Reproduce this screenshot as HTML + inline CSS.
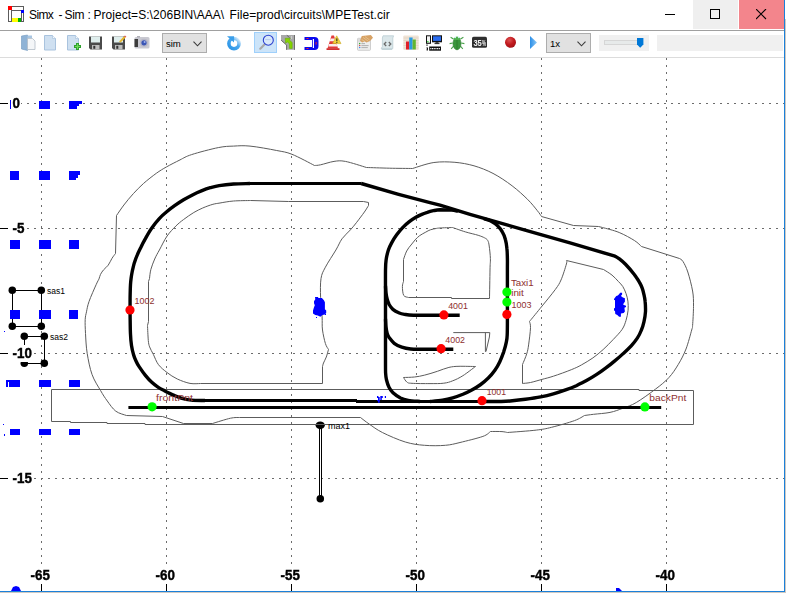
<!DOCTYPE html>
<html lang="en">
<head>
<meta charset="utf-8">
<title>Simx - Sim</title>
<style>
html,body{margin:0;padding:0;background:#fff;}
body{width:786px;height:593px;overflow:hidden;position:relative;font-family:"Liberation Sans",sans-serif;}
.win{position:absolute;left:0;top:0;width:784px;height:591px;background:#fff;border-right:1px solid #1b80d9;border-bottom:1px solid #1b80d9;overflow:hidden;}
.edge-r{position:absolute;left:785px;top:19px;width:1px;height:574px;background:#cfc9c2;}
.edge-b{position:absolute;left:0;top:592px;width:786px;height:1px;background:#cfc9c2;}
.titlebar{position:absolute;left:0;top:0;width:784px;height:30px;background:#fff;}
.appicon{position:absolute;left:8px;top:6px;}
.title{position:absolute;left:29px;top:7px;width:370px;height:16px;line-height:16px;font-size:12px;color:#000;white-space:pre;}
.title span{position:absolute;top:0;}
.cap{position:absolute;top:0;height:29px;}
.cap svg{position:absolute;top:9px;}
.cap.min{left:647px;width:46px;}
.cap.max{left:693px;width:45px;background:#efefef;}
.cap.close{left:739px;width:45px;background:#f3858c;}
.toolbar{position:absolute;left:0;top:30px;width:784px;height:28px;background:#fff;border-top:1px solid #a0a0a0;border-bottom:1px solid #dcdcdc;box-sizing:border-box;}
.tb{position:absolute;left:0;top:0;width:784px;height:58px;pointer-events:none;}
.ic{position:absolute;overflow:visible;}
.sel{position:absolute;background:#cce4f9;border:1px solid #9fd0fb;}
.combo{position:absolute;top:33px;height:18px;width:43px;background:#e1e1e1;border:1px solid #adadad;font-size:9.6px;line-height:19px;color:#000;}
.combo span{position:absolute;left:3px;top:0;white-space:pre;letter-spacing:-0.1px;}
.combo svg{position:absolute;right:4px;top:7px;}
.slider{position:absolute;left:599px;top:35px;width:50px;height:16px;background:#f0f0f0;}
.slider .trk{position:absolute;left:5px;top:5px;width:32px;height:3px;background:#e7eaea;border:1px solid #d6d6d6;box-sizing:content-box;}
.slider svg{position:absolute;left:38px;top:3px;}
.status{position:absolute;left:657px;top:35px;width:126px;height:16px;background:#f0f0f0;}
.plot{position:absolute;left:0;top:58px;}
.axis,.gs{will-change:transform;}
</style>
</head>
<body>
<div class="win">
  <div class="titlebar">
    <svg class="appicon" width="16" height="16" viewBox="0 0 16 16" shape-rendering="crispEdges">
      <rect x="0.5" y="0.5" width="15" height="15" fill="#fff" stroke="#5c5c5c"/>
      <path d="M3.5,4V15.5M13.5,7V15.5M4,4.5H13M3.5,12.5H13.5" stroke="#5c5c5c" fill="none"/>
      <rect x="0" y="0" width="4" height="4" fill="#ff0000"/>
      <rect x="13" y="4" width="3" height="3" fill="#0000ff"/>
      <rect x="4" y="12" width="6" height="3.5" fill="#ffff00"/>
      <rect x="10" y="12" width="3" height="3.5" fill="#00b400"/>
    </svg>
    <div class="title"><span style="left:0;letter-spacing:-0.6px">Simx </span><span style="left:29.4px">- </span><span style="left:35.6px;letter-spacing:-0.4px">Sim </span><span style="left:58.6px">: </span><span style="left:64.4px;letter-spacing:0.05px">Project=S:\206BIN\AAA\  </span><span style="left:200.6px;letter-spacing:0.06px">File=prod\circuits\MPETest.cir</span></div>
    <div class="cap min"><svg style="left:18px" width="11" height="11" viewBox="0 0 11 11" shape-rendering="crispEdges"><rect x="0" y="5" width="10" height="1" fill="#000"/></svg></div>
    <div class="cap max"><svg style="left:17px" width="11" height="11" viewBox="0 0 11 11" shape-rendering="crispEdges"><rect x="0.5" y="0.5" width="9" height="9" fill="none" stroke="#000"/></svg></div>
    <div class="cap close"><svg style="left:17px" width="11" height="11" viewBox="0 0 11 11"><path d="M0,0L10,10M10,0L0,10" stroke="#000" stroke-width="1.1" fill="none"/></svg></div>
  </div>
  <div class="toolbar"></div>
  <div class="tb">
<svg class="ic" style="left:21px;top:35px" width="16" height="16" viewBox="0 0 16 16"><path d="M0.5,1 L6.5,0 L6.5,15.5 L0.5,14Z" fill="#8fb3d6" stroke="#6f97c0" stroke-width=".6"/><path d="M6.5,0.5H11V3H6.5Z" fill="#a9c6e2"/><path d="M6.5,3.5H11.5L14,6V14.5H6.5Z" fill="#f4f6f8" stroke="#b3bcc6" stroke-width=".8"/></svg>
<svg class="ic" style="left:44px;top:35px" width="16" height="16" viewBox="0 0 16 16"><path d="M0.5,0.5H8.5L11.5,3.5V15H0.5Z" fill="#cfe0f1" stroke="#a9c3de" stroke-width="1"/><path d="M8.5,0.5V3.5H11.5" fill="#f3f8fc" stroke="#a9c3de" stroke-width=".7"/></svg>
<svg class="ic" style="left:67px;top:35px" width="16" height="16" viewBox="0 0 16 16"><path d="M0.5,0.5H8.5L11.5,3.5V15H0.5Z" fill="#cfe0f1" stroke="#a9c3de" stroke-width="1"/><path d="M8.5,0.5V3.5H11.5" fill="#f3f8fc" stroke="#a9c3de" stroke-width=".7"/><path d="M7,11.5H14M10.5,8V15" stroke="#2f9f2f" stroke-width="3"/><path d="M8,11.5H13M10.5,9V14" stroke="#6fdc5a" stroke-width="1.2"/></svg>
<svg class="ic" style="left:88px;top:35px" width="16" height="16" viewBox="0 0 16 16"><path d="M1,1.5H14V14.5H2.5L1,13Z" fill="#4a4a4a"/><rect x="3" y="1.5" width="9" height="6" fill="#dfeeed"/><rect x="4" y="10" width="7.5" height="4.5" fill="#bdbdbd"/><rect x="5.3" y="10.8" width="2" height="3" fill="#333"/></svg>
<svg class="ic" style="left:111px;top:35px" width="16" height="16" viewBox="0 0 16 16"><path d="M1,1.5H14V14.5H2.5L1,13Z" fill="#4a4a4a"/><rect x="3" y="1.5" width="9" height="6" fill="#dfeeed"/><rect x="4" y="10" width="7.5" height="4.5" fill="#bdbdbd"/><rect x="5.3" y="10.8" width="2" height="3" fill="#333"/><path d="M8,6.5 L13,1.2 L14.6,2.6 L9.6,7.6Z" fill="#e8b830"/><path d="M13,1.2L14,0.4L15.4,1.8L14.6,2.6Z" fill="#e05050"/></svg>
<svg class="ic" style="left:134px;top:35px" width="16" height="16" viewBox="0 0 16 16"><rect x="0.5" y="2" width="15" height="11.5" rx="1.5" fill="#c9c9d1"/><rect x="0.5" y="4" width="3.5" height="8" fill="#3c3c3c"/><rect x="3" y="1" width="3" height="1.5" fill="#b0b0b8"/><circle cx="10" cy="7.8" r="4" fill="#b7b7c7"/><circle cx="10" cy="7.8" r="2.6" fill="#3a55b5"/><circle cx="10.6" cy="7" r="1" fill="#9fb2ee"/></svg>
<svg class="ic" style="left:226px;top:35px" width="16" height="16" viewBox="0 0 16 16"><defs><linearGradient id="rg" x1="0" y1="1" x2="1" y2="0"><stop offset="0" stop-color="#2a94e6"/><stop offset=".6" stop-color="#4aa8ee"/><stop offset="1" stop-color="#e8f3fc"/></linearGradient></defs><circle cx="8" cy="8.6" r="5.1" fill="none" stroke="url(#rg)" stroke-width="3.6"/><path d="M1,1.2H8V7.5L5.5,5.2Z" fill="#3b9fea"/><path d="M6.3,1.5H8V5" fill="none" stroke="#fff" stroke-width="0"/></svg>
<div class="sel" style="left:254px;top:32px;width:21px;height:19px"></div><svg class="ic" style="left:258px;top:35px" width="16" height="16" viewBox="0 0 16 16"><path d="M2.3,13.7L6.7,9.3" stroke="#a8a8a8" stroke-width="2.2" stroke-linecap="round"/><circle cx="10.3" cy="5.2" r="5" fill="#d9e8fa" stroke="#2a3fd0" stroke-width="1.1"/><path d="M7.2,4.6H12.8" stroke="#b8cdee" stroke-width="1"/></svg>
<svg class="ic" style="left:281px;top:35px" width="16" height="16" viewBox="0 0 16 16"><path d="M0,0H14V14.8H5.1V9.8L0,5.3Z" fill="#a9a9a9"/><path d="M5.6,9.8V14.8M13.5,0V14.8" stroke="#6e6e6e" stroke-width="1" fill="none"/><path d="M0.2,5.2L5.4,9.9M5.8,0.3L8.6,2.6" stroke="#666" stroke-width="1" fill="none"/><path d="M10.6,1V4M10.6,10V13" stroke="#d8d8d8" stroke-width=".8"/><path d="M4.2,3.3H9.3L8.2,4.9L11.2,7.5V13.4H8.4V8.8L6.3,6.9L4.6,8.2Z" fill="#86d400" stroke="#5fa800" stroke-width=".5"/></svg>
<svg class="ic" style="left:304px;top:35px" width="16" height="16" viewBox="0 0 16 16"><path d="M0.5,2H10.5Q14.5,2 14.5,6V11Q14.5,15 10.5,15H0.5V12H8V5H0.5Z" fill="#0a0aee"/><rect x="8.8" y="4" width="1.2" height="9" fill="#fff"/><rect x="2.5" y="3" width="2" height="1" fill="#ff2020"/><rect x="2.5" y="13" width="2" height="1" fill="#ff2020"/><rect x="11.6" y="7" width="1" height="2.6" fill="#ff2020"/></svg>
<svg class="ic" style="left:326px;top:35px" width="16" height="16" viewBox="0 0 16 16"><path d="M5.5,0.5H8L12,13.5H1.5Z" fill="#e23b3b"/><path d="M4.6,3.6H9L9.8,6.2H3.8Z" fill="#fbeeee"/><path d="M3,9H10.6L11.4,11.4H2.3Z" fill="#fbeeee"/><path d="M0.5,13.2H13.5V15H0.5Z" fill="#d03030"/><path d="M10.7,0.8L15,8.6H6.6Z" fill="#f2d43a" stroke="#c9a820" stroke-width=".6"/><rect x="10.3" y="3.4" width="1.1" height="2.6" fill="#222"/><rect x="10.3" y="6.7" width="1.1" height="1.1" fill="#222"/></svg>
<svg class="ic" style="left:357px;top:35px" width="16" height="16" viewBox="0 0 16 16"><rect x="0.5" y="3.3" width="13" height="12" rx="0.8" fill="#ededed" stroke="#c4c4c4" stroke-width=".8"/><rect x="0.9" y="3.7" width="12.2" height="3.2" fill="#dcdcdc"/><circle cx="2.7" cy="8.6" r=".75" fill="#2fae2f"/><circle cx="2.7" cy="10.6" r=".75" fill="#d04848"/><circle cx="2.7" cy="12.6" r=".75" fill="#3a84f0"/><path d="M4.4,8.6H8M4.4,10.6H11.6M4.4,12.6H10.8" stroke="#a9a9a9" stroke-width=".9"/><path d="M3,5.8L4.8,0.9L13.9,0L16,2.7L13.3,5.8L9.6,7.6L7.6,6.2L5.2,7.4Z" fill="#d7a265"/><path d="M6,2.4L11,6M8,1.6L12.6,5M4.6,4.4L8,6.6" stroke="#f0d3a4" stroke-width=".6" fill="none"/></svg>
<svg class="ic" style="left:380px;top:35px" width="16" height="16" viewBox="0 0 16 16"><path d="M3,0.8H13.6L12.8,3V13.6H1.2L2.4,11.5V3Z" fill="#dbe7ea" stroke="#b9cdd2" stroke-width=".8"/><path d="M1,13.6H11.5L12.6,15H2Z" fill="#c3d4d9"/><path d="M6.2,7L4.2,9L6.2,11M8.8,7L10.8,9L8.8,11" fill="none" stroke="#6a6a6a" stroke-width="1.3"/></svg>
<svg class="ic" style="left:403px;top:35px" width="16" height="16" viewBox="0 0 16 16"><rect x="0.3" y="0.5" width="15.4" height="14.6" rx="1" fill="#efe3d6"/><path d="M0.5,3H15.5M0.5,5.5H15.5M0.5,8H15.5M0.5,10.5H15.5M0.5,13H15.5" stroke="#e0d0bf" stroke-width=".7"/><rect x="3" y="6.5" width="3.2" height="8" fill="#e0202a"/><rect x="6.2" y="2.5" width="3.4" height="12" fill="#2a9be0"/><rect x="9.6" y="4.5" width="3.2" height="10" fill="#62b530"/></svg>
<svg class="ic" style="left:426px;top:35px" width="16" height="16" viewBox="0 0 16 16"><rect x="0" y="0.3" width="5" height="8.5" fill="#111"/><rect x="1" y="1.3" width="3" height="6.4" fill="#f4f4f4"/><rect x="1.2" y="6" width="1.3" height="1.3" fill="#2fd22f"/><rect x="6" y="0.3" width="10" height="7" fill="#111"/><rect x="7" y="1.3" width="8" height="4.6" fill="#2a6cf0"/><rect x="9.5" y="7.3" width="3" height="1" fill="#111"/><rect x="8.5" y="8.2" width="5" height="0.9" fill="#111"/><rect x="3.2" y="11.5" width="11.8" height="4.2" fill="#111"/><path d="M4.3,13.6H14" stroke="#fff" stroke-width="1.3" stroke-dasharray="1.1 0.6"/><path d="M1,9.5V10.8M0.7,12.5Q2,13 1,15.5" stroke="#111" stroke-width="1.2" fill="none"/></svg>
<svg class="ic" style="left:449px;top:35px" width="16" height="16" viewBox="0 0 16 16"><path d="M4.5,4L1.6,2.2M11.5,4L14.4,2.2M3.8,8L0.6,8.6M12.2,8L15.4,8.6M4.6,11L2.2,13.8M11.4,11L13.8,13.8" stroke="#4aa04a" stroke-width="1.1" fill="none"/><ellipse cx="8" cy="8.6" rx="4" ry="6.2" fill="#3a963c" stroke="#2b7a30" stroke-width=".6"/><path d="M4.6,3.2Q8,0 11.4,3.2L10.8,5H5.2Z" fill="#4eb04e"/><path d="M8,5V14.6" stroke="#2c7c2c" stroke-width=".9"/><circle cx="6.2" cy="2.4" r=".8" fill="#d8f4ff"/><circle cx="9.8" cy="2.4" r=".8" fill="#d8f4ff"/></svg>
<svg class="ic gs" style="left:472px;top:35px" width="16" height="16" viewBox="0 0 16 16"><rect x="0" y="1.8" width="15" height="11" rx="1.6" fill="#2f2f2f"/><g font-family="'Liberation Sans',sans-serif" font-weight="bold" fill="#f4f4f4"><text x="1.4" y="11" font-size="9.6" textLength="8.4" lengthAdjust="spacingAndGlyphs">35</text><text x="10.1" y="10.8" font-size="8.6" textLength="4.1" lengthAdjust="spacingAndGlyphs">%</text></g></svg>
<svg class="ic" style="left:503px;top:35px" width="16" height="16" viewBox="0 0 16 16"><defs><radialGradient id="rr" cx=".4" cy=".3" r=".8"><stop offset="0" stop-color="#dc5252"/><stop offset=".5" stop-color="#c21a1e"/><stop offset="1" stop-color="#9c1016"/></radialGradient></defs><circle cx="7.5" cy="7.3" r="5.5" fill="url(#rr)"/></svg>
<svg class="ic" style="left:526px;top:35px" width="16" height="16" viewBox="0 0 16 16"><defs><linearGradient id="pg" x1="0" y1="0" x2="1" y2="0"><stop offset="0" stop-color="#2b8fe8"/><stop offset="1" stop-color="#8cc6f4"/></linearGradient></defs><path d="M4,1L11,7.5L4,14Z" fill="url(#pg)"/></svg>
    <div class="combo" style="left:162px"><span>sim</span><svg width="9" height="6" viewBox="0 0 9 6"><path d="M0.5,0.7L4.5,4.8L8.5,0.7" fill="none" stroke="#3a3a3a" stroke-width="1.1"/></svg></div>
    <div class="combo" style="left:546px"><span>1x</span><svg width="9" height="6" viewBox="0 0 9 6"><path d="M0.5,0.7L4.5,4.8L8.5,0.7" fill="none" stroke="#3a3a3a" stroke-width="1.1"/></svg></div>
    <div class="slider"><div class="trk"></div><svg width="7" height="10" viewBox="0 0 7 10"><path d="M0,0H6.4V6.6L3.2,9.8L0,6.6Z" fill="#0078d7"/></svg></div>
    <div class="status"></div>
  </div>
<svg class="plot" width="786" height="535" viewBox="0 58 786 535">
<g stroke="#6c6c6c" stroke-width="1" stroke-dasharray="2 5" shape-rendering="crispEdges" fill="none">
<line x1="41.5" y1="58" x2="41.5" y2="565"/>
<line x1="166.5" y1="58" x2="166.5" y2="565"/>
<line x1="291.5" y1="58" x2="291.5" y2="565"/>
<line x1="416.5" y1="58" x2="416.5" y2="565"/>
<line x1="541.5" y1="58" x2="541.5" y2="565"/>
<line x1="666.5" y1="58" x2="666.5" y2="565"/>
<line x1="20" y1="103.5" x2="784" y2="103.5"/>
<line x1="20" y1="228.5" x2="784" y2="228.5"/>
<line x1="20" y1="353.5" x2="784" y2="353.5"/>
<line x1="20" y1="478.5" x2="784" y2="478.5"/>
</g>
<g stroke="#000" stroke-width="1" fill="none" shape-rendering="crispEdges">
<path d="M12.5,290.5H41.5V326.5H12.5Z"/>
<path d="M24.5,336.5H44.5V363.5H24.5Z"/>
<path d="M319.5,425V498M321.5,425V498"/>
</g>
<g fill="#000">
<circle cx="12.3" cy="290.3" r="3.75"/>
<circle cx="41.3" cy="290.3" r="3.75"/>
<circle cx="12.3" cy="326.3" r="3.75"/>
<circle cx="41.3" cy="326.3" r="3.75"/>
<circle cx="24.3" cy="336.3" r="3.75"/>
<circle cx="44.3" cy="336.3" r="3.75"/>
<circle cx="44.3" cy="363.3" r="3.75"/>
<circle cx="320.3" cy="498.8" r="3.75"/>
<circle cx="24.3" cy="363.3" r="3.75"/>
<ellipse cx="320.2" cy="425.3" rx="4.6" ry="3.9"/>
</g>
<g stroke="#5c5c5c" stroke-width="1" fill="none" stroke-linejoin="round">
<path d="M51.5,389.5 L639.0,389.5 L639.0,390.5 L693.5,390.5 L693.5,424.5 L145.0,424.5 L145.0,423.5 L107.0,423.5 L107.0,422.5 L70.5,422.5 L70.5,421.5 L51.5,421.5Z"/>
<path d="M115.5,253.5 L116.5,215.5 C117.7,213.8 121.1,208.7 123.9,205.0 C126.7,201.3 130.1,197.2 133.4,193.6 C136.7,190.0 139.8,186.8 143.6,183.4 C147.4,180.0 152.5,176.1 156.3,173.3 C160.1,170.6 162.6,169.1 166.5,166.9 C170.4,164.7 175.8,162.0 180.0,159.9 C184.2,157.8 185.2,156.7 191.6,154.6 C198.0,152.5 211.3,149.0 218.3,147.6 C225.3,146.2 228.3,146.3 233.6,146.1 C238.9,145.8 242.8,145.4 250.0,146.1 C257.2,146.8 269.7,149.1 276.7,150.5 C283.7,151.9 285.7,151.8 292.0,154.3 C298.3,156.8 310.8,163.6 314.5,165.5 C315.5,165.4 317.4,165.5 320.6,164.8 C323.9,164.1 329.9,162.0 334.0,161.4 C338.1,160.8 340.0,160.4 345.4,161.4 C350.8,162.4 363.0,166.5 366.5,167.5 C370.3,167.6 381.6,168.0 389.3,168.2 C397.0,168.4 408.6,168.4 412.5,168.5 C416.1,167.5 426.8,163.5 433.9,162.5 C441.0,161.5 448.2,161.8 454.9,162.3 C461.6,162.9 467.6,164.0 474.0,165.8 C480.4,167.7 486.6,170.1 493.0,173.4 C499.4,176.7 506.4,181.5 512.1,185.8 C517.8,190.1 523.2,195.1 527.4,199.2 C531.6,203.3 534.9,207.6 537.2,210.5 C539.6,213.4 540.8,215.5 541.5,216.5 L573.5,225.5 L598.5,226.5 L602.5,227.5 C605.3,228.3 613.9,230.3 619.2,232.5 C624.5,234.7 630.7,238.2 634.4,240.5 C638.1,242.8 640.3,245.5 641.5,246.5 L679.5,258.5 C680.1,259.0 681.6,259.2 683.0,261.5 C684.4,263.8 686.2,267.1 687.8,272.0 C689.4,276.9 691.6,285.3 692.6,291.0 C693.6,296.7 693.5,300.6 693.5,306.3 C693.5,312.0 692.9,321.4 692.6,325.4 C692.3,329.3 692.8,326.1 691.7,330.0 C690.6,333.9 688.2,343.3 686.0,349.0 C683.8,354.7 681.2,359.6 678.3,364.4 C675.4,369.2 672.6,373.6 668.8,377.7 C665.0,381.8 660.8,385.1 655.4,389.2 C650.0,393.3 641.7,399.3 636.3,402.5 C630.9,405.7 627.4,406.6 623.0,408.2 C618.6,409.8 614.9,411.4 610.0,412.4 C605.1,413.4 597.9,413.8 593.6,414.3 C589.4,414.8 586.0,415.3 584.5,415.5 C582.8,416.4 580.0,418.6 574.5,420.6 C569.0,422.6 558.0,425.7 551.6,427.3 C545.2,428.9 543.6,429.2 536.3,430.1 C528.9,431.0 512.3,432.1 507.5,432.5 C506.6,432.4 504.8,431.8 502.0,431.6 C499.2,431.4 492.4,431.5 490.5,431.5 C489.2,432.3 488.0,434.6 482.9,436.4 C477.8,438.2 466.2,441.0 460.0,442.5 C453.8,444.0 451.3,444.8 445.4,445.3 C439.5,445.8 431.1,445.9 424.4,445.3 C417.7,444.8 412.3,444.1 405.3,442.0 C398.3,439.9 388.4,435.5 382.4,432.5 C376.4,429.5 372.8,426.5 369.1,424.0 C365.5,421.5 361.9,418.6 360.5,417.5 L239.5,417.5 C238.0,417.6 235.0,417.2 230.5,418.2 C226.0,419.2 215.5,422.6 212.5,423.5 L183.5,423.5 L162.5,416.5 L126.5,415.5 C124.7,414.8 119.0,413.6 115.8,411.2 C112.6,408.8 109.8,404.4 107.3,401.0 C104.8,397.6 103.1,395.0 100.6,390.6 C98.0,386.2 94.2,380.6 92.0,374.4 C89.8,368.2 88.3,360.2 87.2,353.4 C86.1,346.6 85.8,339.1 85.5,333.4 C85.2,327.7 85.0,323.0 85.2,319.4 C85.4,315.8 85.9,314.8 86.5,311.8 C87.1,308.8 87.4,306.2 89.0,301.6 C90.6,297.0 94.6,288.1 96.3,284.3 C98.0,280.5 98.3,280.5 99.0,278.9 C99.7,277.2 99.7,275.9 100.5,274.4 C101.3,272.9 102.3,271.3 103.6,269.8 C104.9,268.3 106.8,267.1 108.2,265.2 C109.6,263.3 110.8,260.2 112.0,258.3 C113.2,256.4 114.9,254.3 115.5,253.5Z"/>
<path d="M250.5,200.5 L288.5,201.5 L363.5,201.5 L368.5,202.5 L368.5,205.5 C367.8,206.6 366.4,209.2 364.4,212.0 C362.4,214.8 359.0,219.3 356.7,222.3 C354.4,225.3 352.8,227.2 350.4,229.9 C347.9,232.7 344.4,235.5 342.0,238.8 C339.6,242.2 338.7,245.3 335.9,250.0 C333.1,254.7 327.9,262.4 325.4,267.2 C322.9,272.0 321.8,273.5 321.0,278.6 C320.2,283.7 320.4,291.3 320.6,297.7 C320.8,304.1 321.8,311.4 322.1,316.8 C322.4,322.2 321.9,325.6 322.5,330.0 C323.1,334.4 324.4,340.2 325.4,343.5 C326.4,346.8 328.0,348.5 328.5,349.5 C328.1,350.8 327.1,354.8 326.3,357.0 C325.5,359.2 324.1,361.4 323.5,363.0 C322.9,364.6 322.7,365.9 322.5,366.5 L322.5,383.5 L200.5,383.5 C198.8,383.5 193.9,384.1 190.0,383.4 C186.1,382.6 181.1,380.8 177.3,379.0 C173.5,377.2 170.1,374.9 167.0,372.5 C163.9,370.1 160.8,367.7 158.5,364.7 C156.2,361.7 154.9,357.5 153.4,354.5 C151.9,351.5 150.4,349.2 149.6,346.9 C148.8,344.6 148.7,344.1 148.3,340.5 C148.0,336.9 147.6,328.0 147.5,325.5 L148.5,321.5 L148.5,281.5 L149.5,278.5 C149.7,277.0 150.0,272.6 150.9,269.3 C151.8,266.1 153.3,262.2 154.7,259.0 C156.1,255.8 157.3,253.8 159.4,250.0 C161.5,246.2 164.3,240.0 167.1,236.0 C169.9,232.0 173.2,228.7 176.0,225.9 C178.8,223.2 180.6,221.7 183.6,219.5 C186.6,217.3 190.6,214.4 193.8,212.5 C197.0,210.6 199.5,209.4 202.7,208.0 C205.9,206.6 210.0,205.1 212.9,204.3 C215.8,203.5 216.6,203.6 220.0,203.0 C223.4,202.4 228.5,201.4 233.6,201.0 C238.7,200.6 247.7,200.6 250.5,200.5Z"/>
<path d="M403.5,281.5 L403.5,259.5 C404.0,258.1 405.4,253.4 406.7,251.0 C407.9,248.6 409.6,246.8 411.0,245.0 C412.4,243.2 413.7,241.5 415.1,239.9 C416.6,238.3 417.9,236.9 419.7,235.6 C421.5,234.3 424.0,233.1 425.8,232.1 C427.6,231.1 428.6,230.4 430.4,229.8 C432.2,229.2 434.9,228.7 436.5,228.4 C438.1,228.1 437.3,228.2 440.0,228.0 C442.7,227.8 450.4,227.6 452.5,227.5 C454.6,228.2 461.1,230.6 465.4,231.9 C469.7,233.2 475.0,234.3 478.2,235.3 C481.4,236.3 482.9,237.0 484.5,237.8 C486.1,238.7 486.9,239.0 487.7,240.4 C488.5,241.8 488.8,243.0 489.2,246.0 C489.6,249.0 490.3,254.6 490.4,258.6 C490.5,262.6 490.1,263.4 490.0,270.0 C489.9,276.6 489.6,293.8 489.5,298.5 L451.5,298.5 L451.5,297.5 L408.5,297.5 C407.7,297.1 404.7,297.2 403.7,295.4 C402.7,293.6 402.4,288.8 402.4,286.5 C402.4,284.2 403.3,282.3 403.5,281.5Z"/>
<path d="M453.3,332.6 L489.8,332.6 L489.4,337.0 L486.0,351.5 L485.4,351.5 L485.4,332.6"/>
<path d="M403.5,377.5 C405.3,377.4 411.0,377.4 414.5,377.0 C418.0,376.6 420.9,376.1 424.7,375.1 C428.5,374.2 433.4,372.6 437.4,371.3 C441.4,370.0 445.3,368.2 448.9,367.4 C452.5,366.6 454.6,366.4 459.0,366.3 C463.4,366.2 472.8,366.5 475.5,366.5 C473.4,368.0 466.7,373.3 462.9,375.7 C459.1,378.1 455.9,379.6 452.7,380.8 C449.5,382.1 447.6,382.7 443.8,383.2 C440.0,383.7 435.3,383.6 430.0,383.6 C424.7,383.6 415.9,383.6 412.0,383.3 C408.1,383.1 408.3,383.1 406.9,382.1 C405.5,381.1 404.1,378.3 403.5,377.5Z"/>
<path d="M566.5,260.5 L603.5,269.5 C604.9,270.4 609.5,273.1 612.0,275.1 C614.5,277.1 616.5,279.5 618.3,281.4 C620.1,283.3 621.5,284.5 622.8,286.5 C624.1,288.5 625.1,291.1 626.0,293.5 C626.9,295.9 627.5,298.4 627.9,301.2 C628.2,304.0 628.4,307.0 628.1,310.2 C627.8,313.4 627.0,317.2 626.0,320.4 C625.0,323.6 624.3,326.1 622.2,329.3 C620.1,332.5 616.5,336.0 613.3,339.4 C610.1,342.8 606.5,346.5 603.1,349.6 C599.7,352.7 596.5,355.3 592.9,357.9 C589.3,360.4 585.1,362.9 581.5,364.9 C577.9,366.9 576.0,367.8 571.3,369.7 C566.6,371.6 558.3,374.6 553.4,376.2 C548.5,377.8 545.8,378.3 542.0,379.4 C538.2,380.4 533.8,381.8 530.5,382.5 C527.2,383.2 523.8,383.3 522.5,383.5 L522.5,364.5 C523.2,362.7 525.7,357.2 526.7,353.9 C527.7,350.6 528.0,349.3 528.6,344.9 C529.2,340.5 530.4,331.6 530.5,327.7 C530.6,323.8 529.7,322.5 529.5,321.5 C531.2,319.4 535.7,313.9 540.0,308.6 C544.3,303.3 551.8,294.3 555.3,289.5 C558.8,284.7 559.1,284.2 561.0,280.0 C562.9,275.8 565.5,267.2 566.4,264.0 C567.3,260.8 566.5,261.1 566.5,260.5Z"/>
</g>
<g stroke="#000" stroke-width="3.4" fill="none" stroke-linecap="butt" stroke-linejoin="round">
<path d="M128.4,407.5H661.2" stroke-width="3"/>
<path d="M200,400.5H357M356,401.5H482" stroke-width="3"/>
<path d="M250,183.5H361.5" stroke-width="3"/>
<path d="M361.2,183.5 L398.6,194.3 L430.0,202.7 L440.0,205.2 L470.0,214.3 L540.0,234.4 L570.0,242.8 L615.0,256.2 C615.7,256.6 617.3,257.3 619.0,258.6 C620.8,260.0 623.0,261.7 625.5,264.3 C628.0,266.9 632.0,271.6 633.9,274.0 C635.8,276.4 636.0,276.9 637.1,278.5 C638.1,280.0 639.1,281.6 639.9,283.2 C640.8,284.8 641.5,286.3 642.2,288.2 C642.9,290.0 643.4,292.1 643.9,294.3 C644.4,296.4 644.9,298.4 645.1,301.2 C645.4,304.1 645.6,308.1 645.5,311.5 C645.3,314.9 644.7,318.5 644.0,321.6 C643.3,324.8 642.4,327.8 641.2,330.5 C640.1,333.3 639.0,335.6 637.3,338.1 C635.6,340.7 633.5,343.3 631.2,345.9 C628.9,348.4 626.2,350.9 623.4,353.4 C620.7,356.0 617.5,358.7 614.5,361.1 C611.6,363.6 608.6,365.9 605.6,368.1 C602.7,370.3 599.9,372.3 596.7,374.4 C593.5,376.5 589.9,378.7 586.5,380.6 C583.1,382.5 579.7,384.1 576.3,385.7 C572.9,387.2 570.1,388.3 566.3,389.7 C562.4,391.1 557.6,392.7 553.4,393.9 C549.1,395.1 545.4,396.0 540.7,396.9 C536.0,397.8 530.5,398.6 525.4,399.3 C520.3,400.0 514.4,400.6 510.2,401.0 C506.0,401.4 504.7,401.4 500.0,401.5 C495.3,401.6 485.0,401.5 482.0,401.5"/>
<path d="M205.0,400.5 C202.7,400.4 195.2,400.5 191.2,400.1 C187.2,399.7 184.1,399.0 181.1,398.1 C178.2,397.3 176.2,396.3 173.4,395.1 C170.6,393.9 166.9,392.0 164.4,390.7 C161.9,389.4 160.4,388.7 158.3,387.3 C156.2,385.9 153.9,384.3 151.8,382.3 C149.7,380.4 147.7,378.2 145.6,375.6 C143.5,373.0 140.7,369.0 139.1,366.6 C137.5,364.2 136.9,363.1 136.0,361.0 C135.1,359.0 134.2,357.1 133.5,354.5 C132.7,351.9 132.0,349.0 131.5,345.6 C131.0,342.2 130.7,339.3 130.5,334.2 C130.2,329.1 130.2,321.2 130.1,315.0 C130.0,308.9 130.1,302.4 130.1,297.3 C130.2,292.2 130.3,287.7 130.5,284.5 C130.7,281.3 130.8,280.5 131.1,278.2 C131.4,275.9 131.9,273.1 132.4,270.5 C133.0,268.0 133.6,265.4 134.3,262.9 C135.1,260.4 136.0,257.9 137.1,255.4 C138.1,252.8 139.4,250.3 140.8,247.5 C142.1,244.7 143.5,241.9 145.4,238.6 C147.2,235.3 149.6,231.0 152.0,227.7 C154.3,224.4 156.9,221.2 159.3,218.6 C161.7,215.9 163.8,214.1 166.4,212.0 C168.9,209.9 171.8,207.7 174.6,205.7 C177.5,203.7 180.6,201.6 183.6,199.8 C186.6,198.0 189.5,196.4 192.5,194.9 C195.5,193.4 198.4,192.1 201.4,190.9 C204.4,189.7 207.3,188.6 210.3,187.7 C213.3,186.9 215.3,186.3 219.2,185.6 C223.1,185.0 228.5,184.4 233.6,184.0 C238.7,183.7 247.3,183.6 250.0,183.5"/>
<path d="M420.0,401.5 C418.0,401.3 411.4,400.9 408.2,400.3 C404.9,399.7 403.0,399.2 400.5,398.0 C398.0,396.7 394.9,394.6 393.0,392.8 C391.1,391.0 390.1,389.5 389.0,387.3 C387.9,385.0 387.0,381.9 386.4,379.5 C385.9,377.2 385.8,376.3 385.6,373.0 C385.5,369.8 385.5,372.2 385.5,360.0 C385.5,347.8 385.5,315.0 385.5,300.0 C385.5,285.0 385.4,276.7 385.5,270.0 C385.6,263.3 385.6,263.2 386.1,259.9 C386.6,256.6 387.4,253.0 388.3,250.2 C389.2,247.4 390.1,245.7 391.5,243.1 C392.8,240.6 394.7,237.6 396.5,235.1 C398.3,232.6 400.1,230.3 402.2,228.1 C404.3,225.9 406.7,223.7 409.0,221.9 C411.3,220.1 413.8,218.5 415.9,217.3 C417.9,216.1 419.3,215.4 421.2,214.6 C423.1,213.7 425.3,212.9 427.3,212.3 C429.3,211.6 431.3,211.1 433.4,210.7 C435.5,210.3 437.0,209.9 440.0,209.8 C443.0,209.8 448.4,209.9 451.4,210.1 C454.4,210.3 456.9,211.0 458.0,211.2"/>
<path d="M484.0,218.6 C485.1,219.0 488.6,219.9 490.8,221.0 C493.0,222.2 495.4,223.7 497.3,225.5 C499.2,227.3 501.0,229.5 502.3,231.9 C503.7,234.2 504.7,236.8 505.4,239.5 C506.2,242.3 506.6,245.2 506.9,248.4 C507.3,251.6 507.3,255.0 507.4,258.6 C507.5,262.2 507.4,259.8 507.4,270.0 C507.4,280.2 507.4,309.2 507.4,320.0 C507.4,330.8 507.4,331.2 507.2,335.0 C507.1,338.8 506.8,339.8 506.2,342.6 C505.7,345.4 504.8,348.4 503.8,351.6 C502.7,354.7 501.3,358.5 499.8,361.7 C498.3,364.9 496.6,367.9 494.7,370.6 C492.8,373.3 490.7,375.8 488.3,378.1 C486.0,380.4 483.5,382.5 480.7,384.5 C478.0,386.5 474.8,388.4 471.8,390.0 C468.9,391.6 466.1,392.9 462.9,394.3 C459.7,395.6 456.1,397.0 452.7,397.9 C449.3,398.9 446.3,399.6 442.5,400.2 C438.7,400.8 432.1,401.3 430.0,401.5"/>
<path d="M385.5,286.0 C385.6,287.2 385.7,290.8 386.0,293.0 C386.3,295.2 386.7,297.4 387.2,299.3 C387.7,301.2 388.2,302.7 389.1,304.4 C390.1,306.1 391.2,308.0 392.9,309.4 C394.6,310.8 397.2,312.1 399.3,313.0 C401.4,313.9 403.3,314.1 405.6,314.5 C407.9,314.9 410.1,315.1 413.3,315.2 C416.5,315.3 423.1,315.2 425.0,315.2 H459.7"/>
<path d="M385.5,319.0 C385.6,320.3 385.7,324.6 386.0,327.0 C386.3,329.4 386.7,331.9 387.2,333.6 C387.7,335.4 387.9,335.9 389.1,337.5 C390.3,339.1 392.1,341.7 394.2,343.3 C396.3,344.9 399.1,346.2 401.8,347.1 C404.6,348.1 406.8,348.6 410.7,349.0 C414.6,349.4 422.6,349.2 425.0,349.2 H453.3"/>
</g>
<g font-family="'Liberation Sans',sans-serif" font-size="9.7">
<text x="134.5" y="303.8" textLength="20.0" lengthAdjust="spacingAndGlyphs" fill="#8e2f2f">1002</text>
<text x="448.2" y="309.0" textLength="19.7" lengthAdjust="spacingAndGlyphs" fill="#8e2f2f">4001</text>
<text x="445.3" y="343.0" textLength="19.7" lengthAdjust="spacingAndGlyphs" fill="#8e2f2f">4002</text>
<text x="486.7" y="394.8" textLength="19.3" lengthAdjust="spacingAndGlyphs" fill="#8e2f2f">1001</text>
<text x="511.0" y="286.0" textLength="22.7" lengthAdjust="spacingAndGlyphs" fill="#8e2f2f">Taxi1</text>
<text x="511.2" y="295.8" textLength="12.6" lengthAdjust="spacingAndGlyphs" fill="#8e2f2f">init</text>
<text x="511.5" y="308.2" textLength="20.0" lengthAdjust="spacingAndGlyphs" fill="#8e2f2f">1003</text>
<text x="156.0" y="400.7" textLength="37.0" lengthAdjust="spacingAndGlyphs" fill="#8e2f2f">frontPnt</text>
<text x="649.3" y="401.0" textLength="37.0" lengthAdjust="spacingAndGlyphs" fill="#8e2f2f">backPnt</text>
<text x="47.1" y="294.0" textLength="18.0" lengthAdjust="spacingAndGlyphs" fill="#000">sas1</text>
<text x="50.0" y="340.0" textLength="18.0" lengthAdjust="spacingAndGlyphs" fill="#000">sas2</text>
<text x="328.0" y="428.8" textLength="22.0" lengthAdjust="spacingAndGlyphs" fill="#000">max1</text>
</g>
<g fill="#ff0000">
<circle cx="130.0" cy="310.0" r="4.6"/>
<circle cx="443.9" cy="314.9" r="4.6"/>
<circle cx="441.1" cy="348.7" r="4.6"/>
<circle cx="506.9" cy="314.4" r="4.6"/>
<circle cx="482.0" cy="400.7" r="4.6"/>
</g>
<g fill="#00ff00">
<circle cx="152.1" cy="406.8" r="4.6"/>
<circle cx="506.9" cy="292.0" r="4.6"/>
<circle cx="506.9" cy="302.0" r="4.6"/>
<circle cx="644.9" cy="406.9" r="4.6"/>
</g>
<g fill="#0000ff" shape-rendering="crispEdges">
<rect x="39" y="101" width="11" height="8"/>
<rect x="10" y="171" width="9" height="9"/>
<rect x="39" y="171" width="11" height="9"/>
<rect x="10" y="240" width="10" height="9"/>
<rect x="39" y="240" width="12" height="9"/>
<rect x="69" y="240" width="10" height="9"/>
<rect x="10" y="310" width="10" height="9"/>
<rect x="39" y="310" width="12" height="9"/>
<rect x="69" y="310" width="9" height="9"/>
<rect x="9" y="380" width="11" height="7"/>
<rect x="39" y="380" width="12" height="7"/>
<rect x="69" y="380" width="11" height="7"/>
<rect x="10" y="429" width="10" height="6"/>
<rect x="39" y="429" width="12" height="6"/>
<rect x="69" y="429" width="11" height="6"/>
<path d="M69,101H82V104H79V106H77V109H69Z"/>
<path d="M69,171H80V175H78V178H76V180H69Z"/>
<rect x="10" y="100" width="1" height="9"/><rect x="6" y="380" width="2" height="7"/><rect x="7" y="380" width="2" height="2"/>
<rect x="3" y="424" width="1" height="1"/><rect x="4" y="434" width="1" height="2"/><rect x="4" y="331" width="1" height="1"/>
</g>
<g fill="#0000ff">
<path d="M315.0,296.9 L318.1,296.9 L318.3,297.9 L321.9,297.9 L323.9,300.2 L324.9,302.2 L324.9,309.3 L326.2,310.4 L326.2,312.9 L324.9,314.4 L322.4,314.9 L320.4,316.7 L317.8,315.4 L315.3,314.9 L313.0,313.4 L313.0,310.4 L314.0,307.3 L314.8,305.3 L314.0,303.2 L314.0,301.2 L315.3,299.2Z"/><path d="M620.1,292.8 L622.1,292.8 L622.1,294.6 L620.9,296.1 L622.9,297.4 L624.9,298.2 L624.9,301.7 L623.7,303.3 L623.2,304.8 L626.0,305.8 L626.0,307.1 L624.4,307.8 L624.9,311.4 L623.7,312.9 L620.9,313.4 L620.9,316.8 L619.1,316.8 L617.3,315.0 L615.3,314.0 L615.0,310.9 L614.0,310.4 L614.0,308.4 L615.0,307.8 L615.0,300.2 L614.0,299.7 L614.0,298.9 L615.3,297.2 L616.3,295.9 L617.8,295.6 L619.3,293.9Z"/>
<rect x="316" y="317" width="1" height="1"/><rect x="325" y="314" width="1" height="1"/>
<path d="M377,396h1.4v2h-1.4z M378,397h1.7v5.7h-1.7z M380.3,396h2.5v2h-1v2h-1.5z M384.8,396h1.2v2h-1.2z M377,400h3v1h-3z"/>
<path d="M11,591 L13,587 L16,586 L19,587 L21,591Z"/><path d="M616,591 L616,588 L619,588 L622,591Z"/>
</g>
<g shape-rendering="crispEdges">
<rect x="12" y="95" width="9" height="17" fill="#fff"/>
<rect x="0" y="103" width="8" height="1" fill="#000"/>
<rect x="11" y="220" width="14" height="17" fill="#fff"/>
<rect x="0" y="228" width="8" height="1" fill="#000"/>
<rect x="11" y="345" width="22" height="17" fill="#fff"/>
<rect x="0" y="353" width="8" height="1" fill="#000"/>
<rect x="11" y="470" width="22" height="17" fill="#fff"/>
<rect x="0" y="478" width="8" height="1" fill="#000"/>
<rect x="30" y="566" width="22" height="17" fill="#fff"/>
<rect x="41" y="584" width="1" height="7" fill="#000"/>
<rect x="155" y="566" width="22" height="17" fill="#fff"/>
<rect x="166" y="584" width="1" height="7" fill="#000"/>
<rect x="280" y="566" width="22" height="17" fill="#fff"/>
<rect x="291" y="584" width="1" height="7" fill="#000"/>
<rect x="405" y="566" width="22" height="17" fill="#fff"/>
<rect x="416" y="584" width="1" height="7" fill="#000"/>
<rect x="530" y="566" width="22" height="17" fill="#fff"/>
<rect x="541" y="584" width="1" height="7" fill="#000"/>
<rect x="655" y="566" width="22" height="17" fill="#fff"/>
<rect x="666" y="584" width="1" height="7" fill="#000"/>
</g>
</svg>
<svg class="plot axis" width="786" height="535" viewBox="0 58 786 535">
<g font-family="'Liberation Sans',sans-serif" font-size="13.4" font-weight="bold" fill="#000" stroke="#000" stroke-width="0.4">
<text transform="translate(12.5,108) scale(1,1.1)">0</text>
<text transform="translate(12.5,233) scale(1,1.1)">-5</text>
<text transform="translate(12.5,358) scale(1,1.1)">-10</text>
<text transform="translate(12.5,483) scale(1,1.1)">-15</text>
<text transform="translate(30.5,580) scale(1,1.1)">-65</text>
<text transform="translate(155.5,580) scale(1,1.1)">-60</text>
<text transform="translate(280.5,580) scale(1,1.1)">-55</text>
<text transform="translate(405.5,580) scale(1,1.1)">-50</text>
<text transform="translate(530.5,580) scale(1,1.1)">-45</text>
<text transform="translate(655.5,580) scale(1,1.1)">-40</text>
</g>
</svg>
</div>
<div class="edge-r"></div>
<div class="edge-b"></div>
</body>
</html>
